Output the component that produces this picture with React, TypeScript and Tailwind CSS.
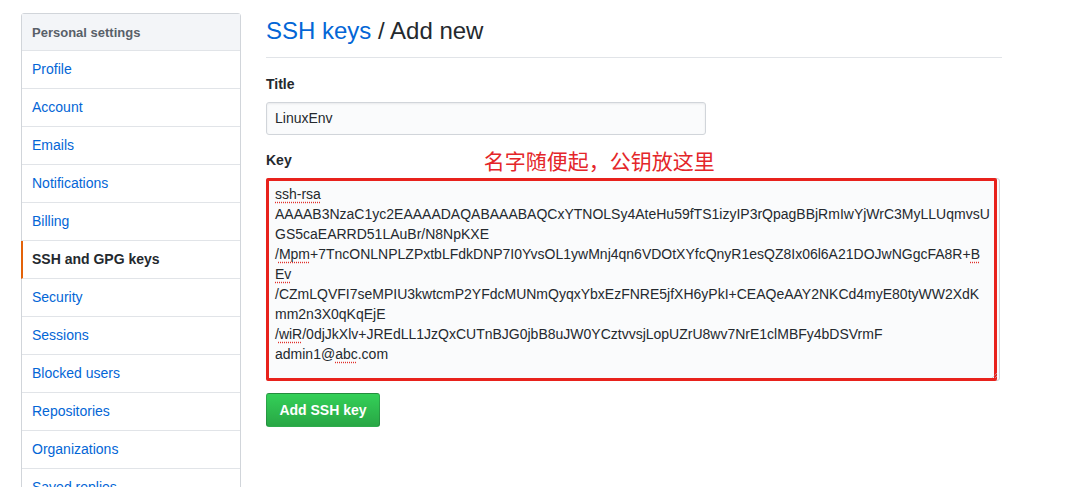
const sans = "font-['Liberation_Sans','Noto_Sans_CJK_SC',sans-serif]";

const navItems = [
  'Profile',
  'Account',
  'Emails',
  'Notifications',
  'Billing',
  'SSH and GPG keys',
  'Security',
  'Sessions',
  'Blocked users',
  'Repositories',
  'Organizations',
  'Saved replies',
];

function Typo({ children }: { children: string }) {
  return <span className="underline decoration-dotted decoration-[#e0302a] underline-offset-[3px]">{children}</span>;
}

export default function App() {
  return (
    <div className={`${sans} h-[487px] w-[1068px] overflow-hidden bg-white text-[#24292e]`}>
      <div className="flex gap-[25px] pl-[21px] pt-[13px]">
        <nav className="w-[220px] shrink-0 rounded-t-[3px] border border-[#d1d5da]">
          <div className="flex h-[37px] items-center border-b border-[#e1e4e8] bg-[#f3f5f8] px-[10px] pt-[2px] text-[13px] font-bold text-[#586069]">
            Personal settings
          </div>
          {navItems.map((item) =>
            item === 'SSH and GPG keys' ? (
              <div
                key={item}
                className="-ml-px flex h-[38px] items-center border-b border-l-2 border-[#e1e4e8] border-l-[#e36209] pl-[9px] text-[14px] font-bold text-[#24292e]"
              >
                {item}
              </div>
            ) : (
              <div key={item} className="flex h-[38px] items-center border-b border-[#e1e4e8] px-[10px] text-[14px] text-[#0366d6]">
                {item}
              </div>
            ),
          )}
        </nav>

        <main className="w-[736px]">
          <h1 className="mt-[3px] border-b border-[#e1e4e8] pb-[11px] text-[24px] leading-[30px] font-normal">
            <span className="text-[#0366d6]">SSH keys</span> / Add new
          </h1>

          <label className="mt-[16px] block text-[14px] leading-[20px] font-bold">Title</label>
          <div className="mt-[8px] flex h-[33px] w-[440px] items-center rounded-[3px] border border-[#d1d5da] bg-[#fafbfc] px-[8px] text-[14px] shadow-[inset_0_1px_2px_rgba(27,31,35,0.075)]">
            LinuxEnv
          </div>

          <div className="mt-[15px] flex h-[20px] items-center">
            <label className="block text-[14px] leading-[20px] font-bold">Key</label>
            <span className="mt-[3px] ml-[192px] text-[21px] leading-[20px] text-[#e4262a]">名字随便起，公钥放这里</span>
          </div>

          <div className="relative mt-[8px] h-[203px] w-[734px] rounded-[3px] border border-[#d1d5da] bg-[#fafbfc] pt-[5px] pl-[8px] text-[14px] leading-[20px] whitespace-nowrap">
            <div><Typo>ssh-rsa</Typo></div>
            <div>AAAAB3NzaC1yc2EAAAADAQABAAABAQCxYTNOLSy4AteHu59fTS1izyIP3rQpagBBjRmIwYjWrC3MyLLUqmvsU</div>
            <div>GS5caEARRD51LAuBr/N8NpKXE</div>
            <div>
              /<Typo>Mpm</Typo>+7TncONLNPLZPxtbLFdkDNP7I0YvsOL1ywMnj4qn6VDOtXYfcQnyR1esQZ8Ix06l6A21DOJwNGgcFA8R+<Typo>B</Typo>
            </div>
            <div><Typo>Ev</Typo></div>
            <div>/CZmLQVFI7seMPIU3kwtcmP2YFdcMUNmQyqxYbxEzFNRE5jfXH6yPkI+CEAQeAAY2NKCd4myE80tyWW2XdK</div>
            <div>mm2n3X0qKqEjE</div>
            <div>
              /<Typo>wiR</Typo>/0djJkXlv+JREdLL1JzQxCUTnBJG0jbB8uJW0YCztvvsjLopUZrU8wv7NrE1clMBFy4bDSVrmF
            </div>
            <div>
              admin1@<Typo>abc</Typo>.com
            </div>

            <div className="pointer-events-none absolute top-[-1px] left-[-1px] h-[203px] w-[731px] rounded-[2px] border-[3px] border-[#e8221c]" />
            <svg className="absolute right-[1px] bottom-[1px]" width="7" height="7" viewBox="0 0 7 7">
              <path d="M6 1 L1 6 M6 4 L4 6" stroke="#b8bcc2" strokeWidth="1" strokeDasharray="1 1" />
            </svg>
          </div>

          <button className="mt-[12px] flex h-[34px] w-[114px] items-center justify-center rounded-[3px] border border-[rgba(27,31,35,0.2)] bg-gradient-to-b from-[#34d058] to-[#28a745] text-[14px] font-bold text-white">
            Add SSH key
          </button>
        </main>
      </div>
    </div>
  );
}
